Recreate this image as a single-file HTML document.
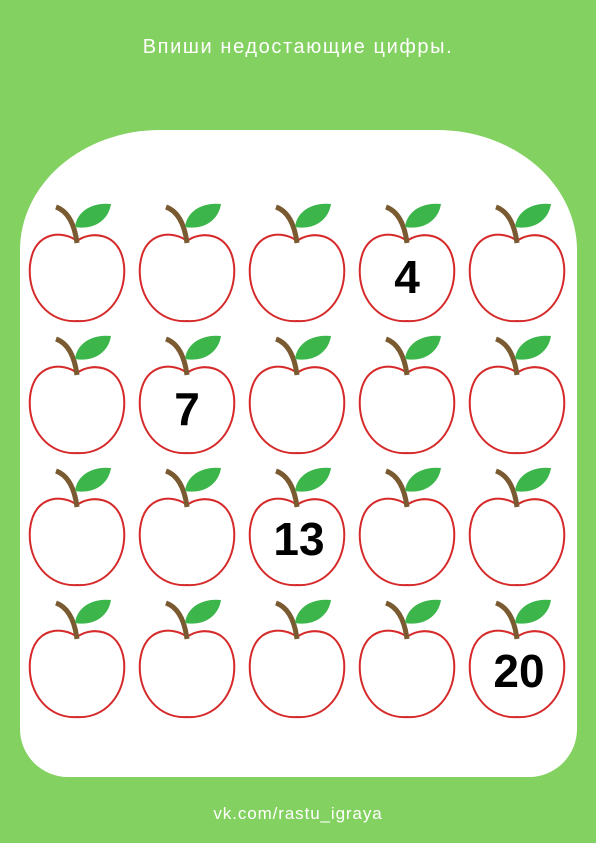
<!DOCTYPE html>
<html><head><meta charset="utf-8">
<style>
html,body{margin:0;padding:0}
body{width:596px;height:843px;background:#83d160;position:relative;overflow:hidden;font-family:"Liberation Sans","DejaVu Sans",sans-serif}
.title{position:absolute;top:36px;left:0;width:596px;text-align:center;color:#fff;font-size:20px;letter-spacing:1.6px}
.panel{position:absolute;left:20px;top:130px;width:557px;height:647px;background:#fff;border-radius:140px 140px 48px 48px / 120px 120px 48px 48px}
.a{position:absolute;width:110px;height:132px}
.n{position:absolute;font-size:46px;color:#000;font-weight:bold;text-align:center;width:110px}
.foot{position:absolute;top:804px;left:0;width:596px;text-align:center;color:#fff;font-size:17px;letter-spacing:0.9px}
</style></head><body>
<div class="title">Впиши недостающие цифры.</div>
<div class="panel"></div>
<svg width="0" height="0" style="position:absolute">
<defs>
<g id="ap">
<path d="M57 46 C45 36 14 34 10 70 C7 104 30 128 57 126 C84 128 107 104 104 70 C100 36 70 36 57 46 Z" fill="#fff" stroke="#d62a2a" stroke-width="2"/>
<path d="M36 12 Q53 18 57 48" fill="none" stroke="#7a5a30" stroke-width="5" stroke-linecap="butt"/>
<path d="M55 32 C57 15 74 7 91 9 C88 27 72 35 55 32 Z" fill="#3cb54a"/>
</g>
</defs>
</svg>
<div id="grid"></div>
<script>
var g=document.getElementById('grid'),h='';
for(var r=0;r<4;r++)for(var c=0;c<5;c++){
h+='<svg class="a" style="left:'+(20+110*c)+'px;top:'+(195+132*r)+'px" viewBox="0 0 110 132"><use href="#ap"/></svg>';}
g.innerHTML=h;
</script>
<div class="n" style="left:352px;top:250px">4</div>
<div class="n" style="left:132px;top:382px">7</div>
<div class="n" style="left:244px;top:512px">13</div>
<div class="n" style="left:464px;top:644px">20</div>
<div class="foot">vk.com/rastu_igraya</div>
</body></html>
